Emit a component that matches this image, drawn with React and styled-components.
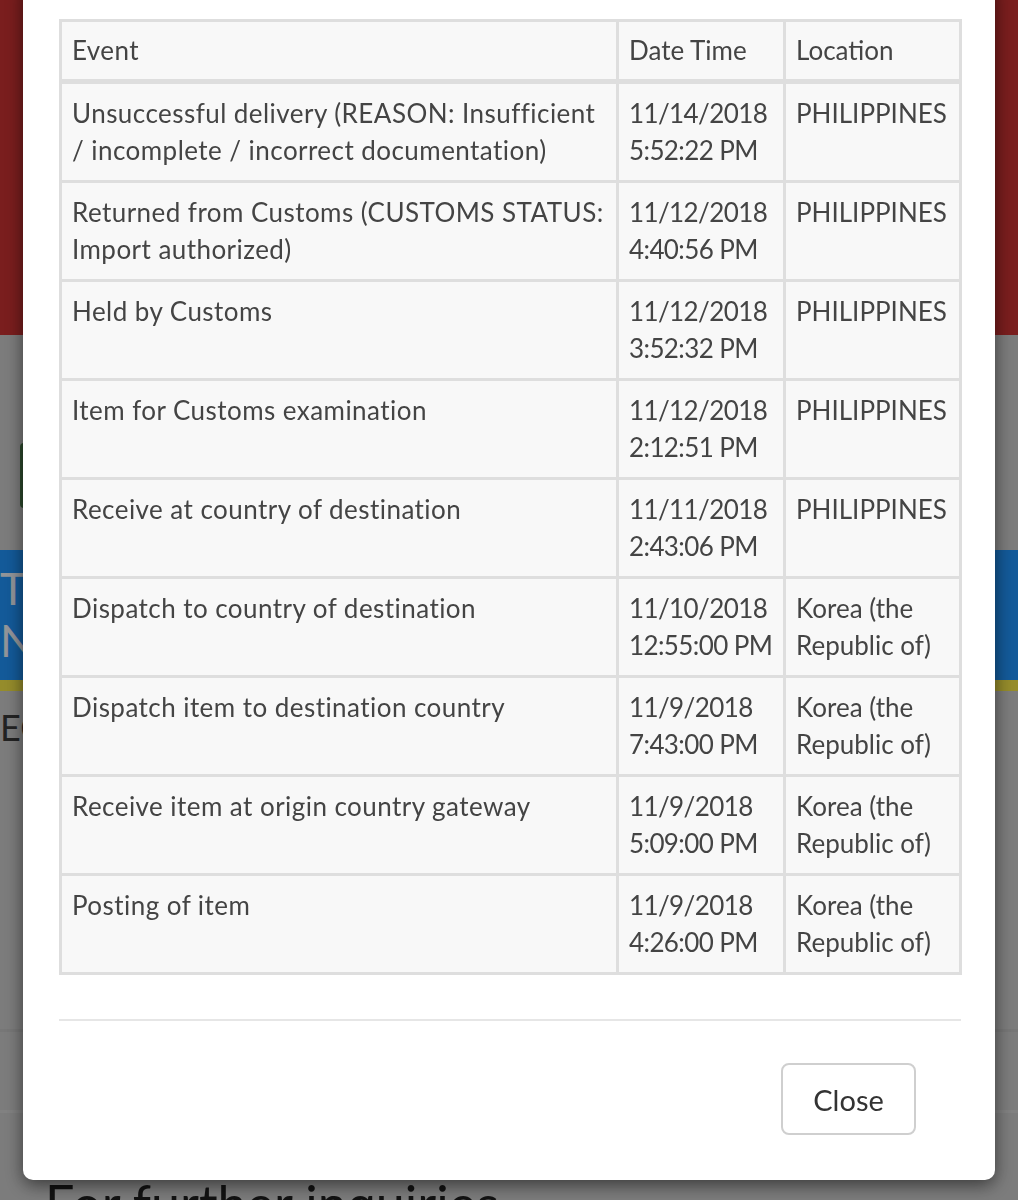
import styled, { createGlobalStyle } from "styled-components";

const GlobalStyle = createGlobalStyle`
  html, body {
    margin: 0;
    padding: 0;
    height: 1200px;
    overflow: hidden;
    background: #cfcfcf;
    font-family: Lato, "Open Sans", Arial, sans-serif;
  }
`;

const events = [
  {
    event: "Unsuccessful delivery (REASON: Insufficient / incomplete / incorrect documentation)",
    date: "11/14/2018",
    time: "5:52:22 PM",
    location: "PHILIPPINES",
  },
  {
    event: "Returned from Customs (CUSTOMS STATUS: Import authorized)",
    date: "11/12/2018",
    time: "4:40:56 PM",
    location: "PHILIPPINES",
  },
  { event: "Held by Customs", date: "11/12/2018", time: "3:52:32 PM", location: "PHILIPPINES" },
  { event: "Item for Customs examination", date: "11/12/2018", time: "2:12:51 PM", location: "PHILIPPINES" },
  { event: "Receive at country of destination", date: "11/11/2018", time: "2:43:06 PM", location: "PHILIPPINES" },
  { event: "Dispatch to country of destination", date: "11/10/2018", time: "12:55:00 PM", location: "Korea (the Republic of)" },
  { event: "Dispatch item to destination country", date: "11/9/2018", time: "7:43:00 PM", location: "Korea (the Republic of)" },
  { event: "Receive item at origin country gateway", date: "11/9/2018", time: "5:09:00 PM", location: "Korea (the Republic of)" },
  { event: "Posting of item", date: "11/9/2018", time: "4:26:00 PM", location: "Korea (the Republic of)" },
];

/* page behind the modal */
const Page = styled.div`
  height: 1200px;
  overflow: hidden;
`;

const Header = styled.header`
  height: 335px;
  background: #cc3232;
`;

const Content = styled.section`
  display: flex;
  flex-direction: column;
  padding-top: 108px;

  & > * {
    flex-shrink: 0;
  }
`;

const TrackButton = styled.div`
  margin-left: 20px;
  width: 300px;
  height: 65px;
  background: #4b7b4b;
  border-radius: 4px;
`;

const Banner = styled.div`
  margin-top: 42px;
  height: 141px;
  background: #2096ff;
  color: #f4f8ff;
  font-size: 44px;
  line-height: 52px;
  padding-top: 12px;
  box-sizing: border-box;
  border-bottom: 11px solid #f8e948;
`;

const SubTitle = styled.div`
  margin-top: 14px;
  height: 44px;
  font-size: 36px;
  line-height: 44px;
  color: #3a3a3a;
  white-space: nowrap;
`;

const Band = styled.div`
  margin-top: ${(p) => p.$top}px;
  height: ${(p) => p.$h}px;
  background: ${(p) => p.$bg};
`;

const Inquiries = styled.h2`
  margin: 0;
  padding: 60px 0 0 45px;
  font-size: 52px;
  line-height: 60px;
  font-weight: 400;
  color: #1e1e1e;
  white-space: nowrap;
`;

/* modal */
const Overlay = styled.div`
  position: fixed;
  inset: 0;
  background: rgba(0, 0, 0, 0.4);
`;

const Dialog = styled.div`
  position: absolute;
  left: 23px;
  width: 972px;
  bottom: 20px;
  background: #fff;
  border-radius: 10px;
  box-shadow: 0 5px 18px rgba(0, 0, 0, 0.55);
`;

const Body = styled.div`
  padding: 40px 36px 44px 36px;
`;

const Table = styled.table`
  width: 900px;
  border-collapse: collapse;
  table-layout: fixed;
  color: #444;
  font-size: 26px;
  line-height: 37px;
`;

const Th = styled.th`
  text-align: left;
  font-weight: 400;
  background: #f8f8f8;
  border: 3px solid #dedede;
  border-bottom-width: 5px;
  padding: 10px 10px;
  vertical-align: top;
  letter-spacing: ${(p) => (p.$wide ? "0.45px" : "0")};
`;

const Td = styled.td`
  background: #f8f8f8;
  border: 3px solid #dedede;
  padding: 11px 10px;
  vertical-align: top;
  letter-spacing: ${(p) => (p.$wide ? "0.45px" : p.$tight ? "-0.6px" : "0")};
  white-space: ${(p) => (p.$tight ? "nowrap" : "normal")};
`;

const Footer = styled.div`
  margin: 0 34px 0 36px;
  border-top: 2px solid #e6e6e6;
  padding: 42px 45px 45px 0;
  display: flex;
  justify-content: flex-end;
`;

const CloseButton = styled.button`
  width: 135px;
  height: 72px;
  background: #fff;
  border: 2px solid #cfcfcf;
  border-radius: 8px;
  font-family: Lato, "Open Sans", Arial, sans-serif;
  font-size: 29px;
  color: #333;
  cursor: pointer;
`;

export default function App() {
  return (
    <>
      <GlobalStyle />
      <Page>
        <Header />
        <Content>
          <TrackButton />
          <Banner>
            <div>Track &amp; Trace</div>
            <div>Number</div>
          </Banner>
          <SubTitle>EC123456789KR</SubTitle>
          <Band $top={280} $h={3} $bg="#c6c6c6" />
          <Band $top={78} $h={3} $bg="#d8d8d8" />
          <Inquiries>For further inquiries</Inquiries>
        </Content>
      </Page>
      <Overlay>
        <Dialog>
          <Body>
            <Table>
              <colgroup>
                <col style={{ width: 557 }} />
                <col style={{ width: 167 }} />
                <col style={{ width: 176 }} />
              </colgroup>
              <thead>
                <tr>
                  <Th $wide>Event</Th>
                  <Th>Date Time</Th>
                  <Th>Location</Th>
                </tr>
              </thead>
              <tbody>
                {events.map((e, i) => (
                  <tr key={i}>
                    <Td $wide>{e.event}</Td>
                    <Td $tight>
                      {e.date}
                      <br />
                      {e.time}
                    </Td>
                    <Td>{e.location}</Td>
                  </tr>
                ))}
              </tbody>
            </Table>
          </Body>
          <Footer>
            <CloseButton>Close</CloseButton>
          </Footer>
        </Dialog>
      </Overlay>
    </>
  );
}
